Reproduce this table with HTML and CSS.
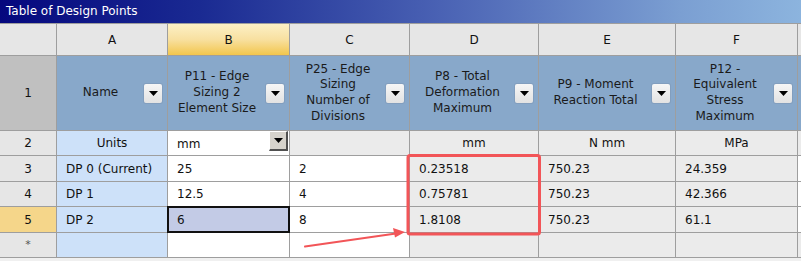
FILE: index.html
```html
<!DOCTYPE html>
<html>
<head>
<meta charset="utf-8">
<link rel="stylesheet" href="styles.css">
</head>
<body>
<div class="panel">
  <div class="title">Table of Design Points</div>
  <div class="grid">
    <div class="c colh"></div>
    <div class="c colh">A</div>
    <div class="c colh sel">B</div>
    <div class="c colh">C</div>
    <div class="c colh">D</div>
    <div class="c colh">E</div>
    <div class="c colh">F</div>
    <div class="c colh"></div>

    <div class="c rn rn1">1</div>
    <div class="c hdr"><span class="ht">Name</span><span class="dd"><svg width="9" height="5" viewBox="0 0 9 5"><polygon points="0,0 9,0 4.5,5" fill="#000"/></svg></span></div>
    <div class="c hdr"><span class="ht">P11 - Edge<br>Sizing 2<br>Element Size</span><span class="dd"><svg width="9" height="5" viewBox="0 0 9 5"><polygon points="0,0 9,0 4.5,5" fill="#000"/></svg></span></div>
    <div class="c hdr"><span class="ht">P25 - Edge<br>Sizing<br>Number of<br>Divisions</span><span class="dd"><svg width="9" height="5" viewBox="0 0 9 5"><polygon points="0,0 9,0 4.5,5" fill="#000"/></svg></span></div>
    <div class="c hdr"><span class="ht">P8 - Total<br>Deformation<br>Maximum</span><span class="dd"><svg width="9" height="5" viewBox="0 0 9 5"><polygon points="0,0 9,0 4.5,5" fill="#000"/></svg></span></div>
    <div class="c hdr"><span class="ht">P9 - Moment<br>Reaction Total</span><span class="dd"><svg width="9" height="5" viewBox="0 0 9 5"><polygon points="0,0 9,0 4.5,5" fill="#000"/></svg></span></div>
    <div class="c hdr"><span class="ht">P12 -<br>Equivalent<br>Stress<br>Maximum</span><span class="dd"><svg width="9" height="5" viewBox="0 0 9 5"><polygon points="0,0 9,0 4.5,5" fill="#000"/></svg></span></div>
    <div class="c hdr"></div>

    <div class="c rn">2</div>
    <div class="c name ctr">Units</div>
    <div class="c inp unit"><span class="ut">mm</span><span class="dd3"><svg width="9" height="5" viewBox="0 0 9 5"><polygon points="0,0 9,0 4.5,5" fill="#000"/></svg></span></div>
    <div class="c out"></div>
    <div class="c out ctr">mm</div>
    <div class="c out ctr">N mm</div>
    <div class="c out ctr">MPa</div>
    <div class="c out"></div>

    <div class="c rn">3</div>
    <div class="c name">DP 0 (Current)</div>
    <div class="c inp">25</div>
    <div class="c inp">2</div>
    <div class="c out">0.23518</div>
    <div class="c out">750.23</div>
    <div class="c out">24.359</div>
    <div class="c wh"></div>

    <div class="c rn">4</div>
    <div class="c name">DP 1</div>
    <div class="c inp">12.5</div>
    <div class="c inp">4</div>
    <div class="c out">0.75781</div>
    <div class="c out">750.23</div>
    <div class="c out">42.366</div>
    <div class="c wh"></div>

    <div class="c rn rn5">5</div>
    <div class="c name">DP 2</div>
    <div class="c inp cur">6</div>
    <div class="c inp">8</div>
    <div class="c out">1.8108</div>
    <div class="c out">750.23</div>
    <div class="c out">61.1</div>
    <div class="c wh"></div>

    <div class="c rn star">*</div>
    <div class="c name"></div>
    <div class="c inp"></div>
    <div class="c inp"></div>
    <div class="c out"></div>
    <div class="c out"></div>
    <div class="c out"></div>
    <div class="c out"></div>
  </div>
  <svg class="annot" width="801" height="261" viewBox="0 0 801 261">
    <rect x="408" y="155.5" width="131.5" height="78.5" rx="2" fill="none" stroke="#f25558" stroke-width="3"/>
    <line x1="305" y1="246.5" x2="396" y2="233.5" stroke="#f25558" stroke-width="2" stroke-linecap="round"/>
    <polygon points="405,232 393,228 395,237.5" fill="#f25558"/>
  </svg>
</div>
</body>
</html>
```

FILE: styles.css
```css
html, body {
  margin: 0;
  padding: 0;
}
body {
  width: 801px;
  height: 261px;
  overflow: hidden;
  background: #f0f0f0;
  font-family: "DejaVu Sans", Verdana, sans-serif;
  font-size: 12px;
  color: #111;
}
.panel {
  position: relative;
  width: 801px;
  height: 261px;
}
.title {
  height: 23px;
  line-height: 22px;
  padding-left: 6px;
  color: #fff;
  background: linear-gradient(to right, #05087e 0%, #1a2a92 25%, #4a62b4 55%, #7b9fd2 85%, #8cb4de 100%);
  white-space: nowrap;
}
.grid {
  display: grid;
  grid-template-columns: 56px 110px 121px 119px 128px 136px 121px 1fr;
  grid-template-rows: 31px 74px 24px 25px 24px 25px 24px;
  gap: 1px;
  padding: 1px 0;
  background: #9e9e9e;
}
.c {
  display: flex;
  align-items: center;
  padding-left: 9px;
  white-space: nowrap;
  overflow: visible;
  min-width: 0;
}
.ctr {
  justify-content: center;
  padding-left: 0;
}
.colh {
  background: #e6e6e6;
  justify-content: center;
  padding-left: 0;
}
.colh.sel {
  background: linear-gradient(to bottom, #fcf0c6 0%, #f8e0a0 50%, #f2c64c 100%);
}
.rn {
  background: #e6e6e6;
  justify-content: center;
  padding-left: 0;
}
.rn1 {
  background: #c0c0c0;
}
.rn5 {
  background: #f5d68a;
}
.star {
  font-size: 11px;
  align-items: flex-start;
  padding-top: 5px;
  color: #555;
}
.hdr {
  background: #88a8ca;
  padding-left: 0;
  color: #1a1a1a;
}
.ht {
  flex: 1;
  text-align: center;
  line-height: 15.7px;
}
.dd {
  width: 18px;
  height: 19px;
  margin-right: 5px;
  flex: none;
  display: flex;
  align-items: center;
  justify-content: center;
  background: linear-gradient(to bottom, #f6f6f6, #e2e2e2);
  border-radius: 2px;
  box-shadow: 0 0 0 1px rgba(120, 140, 170, 0.35);
}
.name {
  background: #cde1f9;
}
.inp {
  background: #fff;
}
.out {
  background: #ebebeb;
}
.wh {
  background: #fff;
}
.unit {
  padding-right: 0;
  justify-content: space-between;
}
.ut {
  padding-top: 2px;
}
.dd3 {
  width: 16px;
  height: 17px;
  align-self: flex-start;
  margin-top: 0;
  margin-right: 1px;
  display: flex;
  align-items: center;
  justify-content: center;
  background: #d6d3cc;
  border-top: 1px solid #fff;
  border-left: 1px solid #fff;
  border-right: 2px solid #505050;
  border-bottom: 2px solid #505050;
}
.cur {
  background: #c3cbe6;
  outline: 2px solid #111;
  outline-offset: -1px;
}
.annot {
  position: absolute;
  left: 0;
  top: 0;
  pointer-events: none;
}
```
